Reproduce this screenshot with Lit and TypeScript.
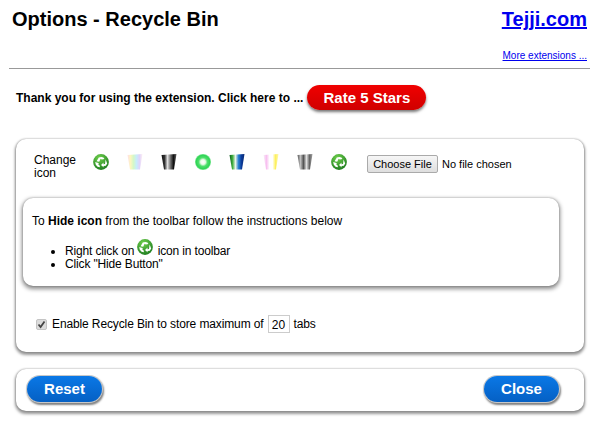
import { LitElement, html, svg, css } from 'lit';
import { customElement } from 'lit/decorators.js';

// Gradient stops (left to right) for the bin icons
const BINS: Record<string, string[]> = {
  rainbow: ['#ffe0e8', '#fdf6c0', '#d4f8c8', '#c8ecfa', '#e0d4fa', '#fff0f4'],
  dark: ['#101010', '#303030', '#e0e0e0', '#707070', '#111', '#606060'],
  ocean: ['#0d5a1e', '#3fae3f', '#e8f4e8', '#2a80d0', '#0a3a9a', '#0a2a70'],
  candy: ['#f8f0f8', '#f8c0f0', '#fff', '#fff', '#fdf060', '#fdf8b0'],
  grey: ['#555', '#c0c0c0', '#555', '#e0e0e0', '#666', '#a0a0a0'],
};

const ICONS = ['ball', 'rainbow', 'dark', 'ring', 'ocean', 'candy', 'grey', 'ball'];

let uid = 0;

function ball() {
  const id = `ball${uid++}`;
  return html`<svg class="icon" viewBox="0 0 16 16">
    <defs>
      <radialGradient id=${id} cx="40%" cy="25%" r="80%">
        <stop offset="0" stop-color="#6fd04c" />
        <stop offset="1" stop-color="#1c7a1e" />
      </radialGradient>
    </defs>
    <circle cx="8" cy="8" r="7.9" fill="url(#${id})" />
    <path d="M3.6 7.2 L5.8 3.6 Q8 2.4 10.4 3.4 L11.4 5 L8.8 5.4 L7.6 4.8 L6.2 7.8 Z" fill="#fff" />
    <path d="M12.6 5.4 L14.2 9.4 L12.8 11.8 L10.4 12 L10.8 13.4 L8 11 L10.6 8.6 L10.4 10.2 L12 10 Z" fill="#fff" />
    <path d="M2.2 8 L6.2 9.2 L5 10 L6.8 11.8 L6.8 13.2 L4.6 12.8 L2.8 10.8 Z" fill="#fff" />
  </svg>`;
}

function ring() {
  const id = `ring${uid++}`;
  return html`<svg class="icon" viewBox="0 0 16 16">
    <defs>
      <radialGradient id=${id} cx="50%" cy="50%" r="50%">
        <stop offset="0" stop-color="#fff" />
        <stop offset="0.3" stop-color="#eafbe8" />
        <stop offset="0.55" stop-color="#4fe06c" />
        <stop offset="0.85" stop-color="#2fd455" />
        <stop offset="1" stop-color="#7fe896" />
      </radialGradient>
    </defs>
    <circle cx="8" cy="8" r="8" fill="url(#${id})" />
  </svg>`;
}

function bin(stops: string[]) {
  const id = `bin${uid++}`;
  return html`<svg class="icon" viewBox="0 0 16 16">
    <defs>
      <linearGradient id=${id}>
        ${stops.map((c, i) => svg`<stop offset=${i / (stops.length - 1)} stop-color=${c} />`)}
      </linearGradient>
    </defs>
    <polygon points="0.5,1 15.5,0 13,15.5 3,15.5" fill="url(#${id})" />
  </svg>`;
}

@customElement('app-root')
export class AppRoot extends LitElement {
  static styles = css`
    :host {
      display: block;
      width: 600px;
      height: 432px;
      overflow: hidden;
      background: #fff;
      color: #000;
      font: 12px/14px 'Liberation Sans', Arial, sans-serif;
    }

    a {
      color: #0000ee;
    }

    .head {
      display: flex;
      justify-content: space-between;
      align-items: flex-start;
      padding: 8px 13px 0 12px;
    }

    h1 {
      margin: 0;
      font-size: 20px;
      line-height: 23px;
    }

    .site {
      font-size: 20px;
      line-height: 23px;
      font-weight: bold;
    }

    .more {
      padding: 18px 13px 0 0;
      text-align: right;
      font-size: 10px;
      line-height: 13px;
    }

    hr {
      margin: 6px 10px 0 9px;
      border: 0;
      height: 1px;
      background: #999;
    }

    .thanks {
      display: flex;
      align-items: center;
      gap: 4px;
      padding: 16px 0 0 16px;
      font-weight: bold;
    }

    .rate {
      width: 119px;
      height: 25px;
      border-radius: 13px;
      background: linear-gradient(#f00000, #d00000);
      box-shadow: 0 2px 3px #777;
      color: #fff;
      font-size: 15px;
      line-height: 25px;
      text-align: center;
    }

    .card {
      margin: 0 16px;
      border-radius: 10px;
      background: #fff;
      box-shadow: 0 2px 3px 1px rgba(0, 0, 0, 0.4), 0 0 2px rgba(0, 0, 0, 0.3);
    }

    .options {
      margin-top: 29px;
      height: 213px;
      padding: 15px 25px 0 7px;
      box-sizing: border-box;
    }

    .picker {
      display: flex;
      align-items: flex-start;
      height: 44px;
    }

    .label {
      width: 50px;
      margin-left: 11px;
      line-height: 13px;
    }

    .icons {
      display: flex;
      gap: 18px;
      margin: 0 20px 0 9px;
    }

    .icon {
      display: block;
      width: 16px;
      height: 16px;
      flex: none;
    }

    input[type='file'] {
      width: 170px;
      margin-top: 1px;
      font: 11px 'Liberation Sans', Arial, sans-serif;
      color: #000;
    }

    input[type='file']::file-selector-button {
      width: 71px;
      height: 18px;
      margin-right: 4px;
      padding: 0;
      border: 1px solid #aaa;
      border-radius: 2px;
      background: linear-gradient(#f6f6f6, #dedede);
      font: 11px 'Liberation Sans', Arial, sans-serif;
      color: #000;
    }

    .hint {
      height: 88px;
      box-sizing: border-box;
      padding: 16px 9px 0;
      border-radius: 10px;
      box-shadow: 0 2px 4px 1px rgba(0, 0, 0, 0.45), 0 0 2px rgba(0, 0, 0, 0.25);
    }

    .hint ul {
      margin: 17px 0 0;
      padding-left: 33px;
    }

    .hint li {
      line-height: 13px;
      letter-spacing: -0.15px;
    }

    .hint .icon {
      display: inline-block;
      vertical-align: 1px;
      margin: -7px 1px -1px 0;
    }

    .store {
      display: flex;
      align-items: center;
      margin: 29px 0 0 13px;
      letter-spacing: -0.12px;
    }

    .check {
      position: relative;
      width: 11px;
      height: 11px;
      margin-right: 5px;
    }

    .check input {
      appearance: none;
      display: block;
      width: 11px;
      height: 11px;
      margin: 0;
      border: 1px solid #c4c4c4;
      border-radius: 2px;
      background: #dcdcdc;
      box-sizing: border-box;
    }

    .check svg {
      position: absolute;
      left: 1px;
      top: 1px;
      width: 9px;
      height: 9px;
      pointer-events: none;
    }

    .count {
      width: 22px;
      height: 18px;
      margin: 0 4px;
      padding: 1px 0 0;
      box-sizing: border-box;
      border: 1px solid #ccc;
      font: 12px 'Liberation Sans', Arial, sans-serif;
      color: #000;
      text-align: center;
    }

    .actions {
      display: flex;
      justify-content: space-between;
      margin-top: 17px;
      height: 42px;
      padding: 7px 25px 0 11px;
      box-sizing: border-box;
    }

    .btn {
      width: 75px;
      height: 26px;
      box-sizing: border-box;
      border: 0;
      padding: 0;
      border-radius: 13px;
      background: linear-gradient(#0a78e6, #0560c4);
      box-shadow: 0 0 0 1px #c8c8c8, 1px 2px 2px 1px #808080;
      color: #fff;
      font: bold 15px/26px 'Liberation Sans', Arial, sans-serif;
      text-align: center;
    }
  `;

  renderIcon(name: string) {
    if (name === 'ball') return ball();
    if (name === 'ring') return ring();
    return bin(BINS[name]);
  }

  render() {
    return html`
      <div class="head">
        <h1>Options - Recycle Bin</h1>
        <a class="site" href="#">Tejji.com</a>
      </div>
      <div class="more"><a href="#">More extensions ...</a></div>
      <hr />
      <div class="thanks">
        <span>Thank you for using the extension. Click here to ...</span>
        <div class="rate">Rate 5 Stars</div>
      </div>

      <div class="card options">
        <div class="picker">
          <div class="label">Change icon</div>
          <div class="icons">${ICONS.map((name) => this.renderIcon(name))}</div>
          <input type="file" />
        </div>
        <div class="hint">
          To <b>Hide icon</b> from the toolbar follow the instructions below
          <ul>
            <li>Right click on ${ball()} icon in toolbar</li>
            <li>Click "Hide Button"</li>
          </ul>
        </div>
        <div class="store">
          <span class="check">
            <input type="checkbox" checked />
            <svg viewBox="0 0 9 9"><path d="M1.5 4.5 L3.6 7 L7.5 1.5" fill="none" stroke="#444" stroke-width="1.8" /></svg>
          </span>
          Enable Recycle Bin to store maximum of
          <input class="count" type="text" value="20" />
          tabs
        </div>
      </div>

      <div class="card actions">
        <button class="btn">Reset</button>
        <button class="btn">Close</button>
      </div>
    `;
  }
}
